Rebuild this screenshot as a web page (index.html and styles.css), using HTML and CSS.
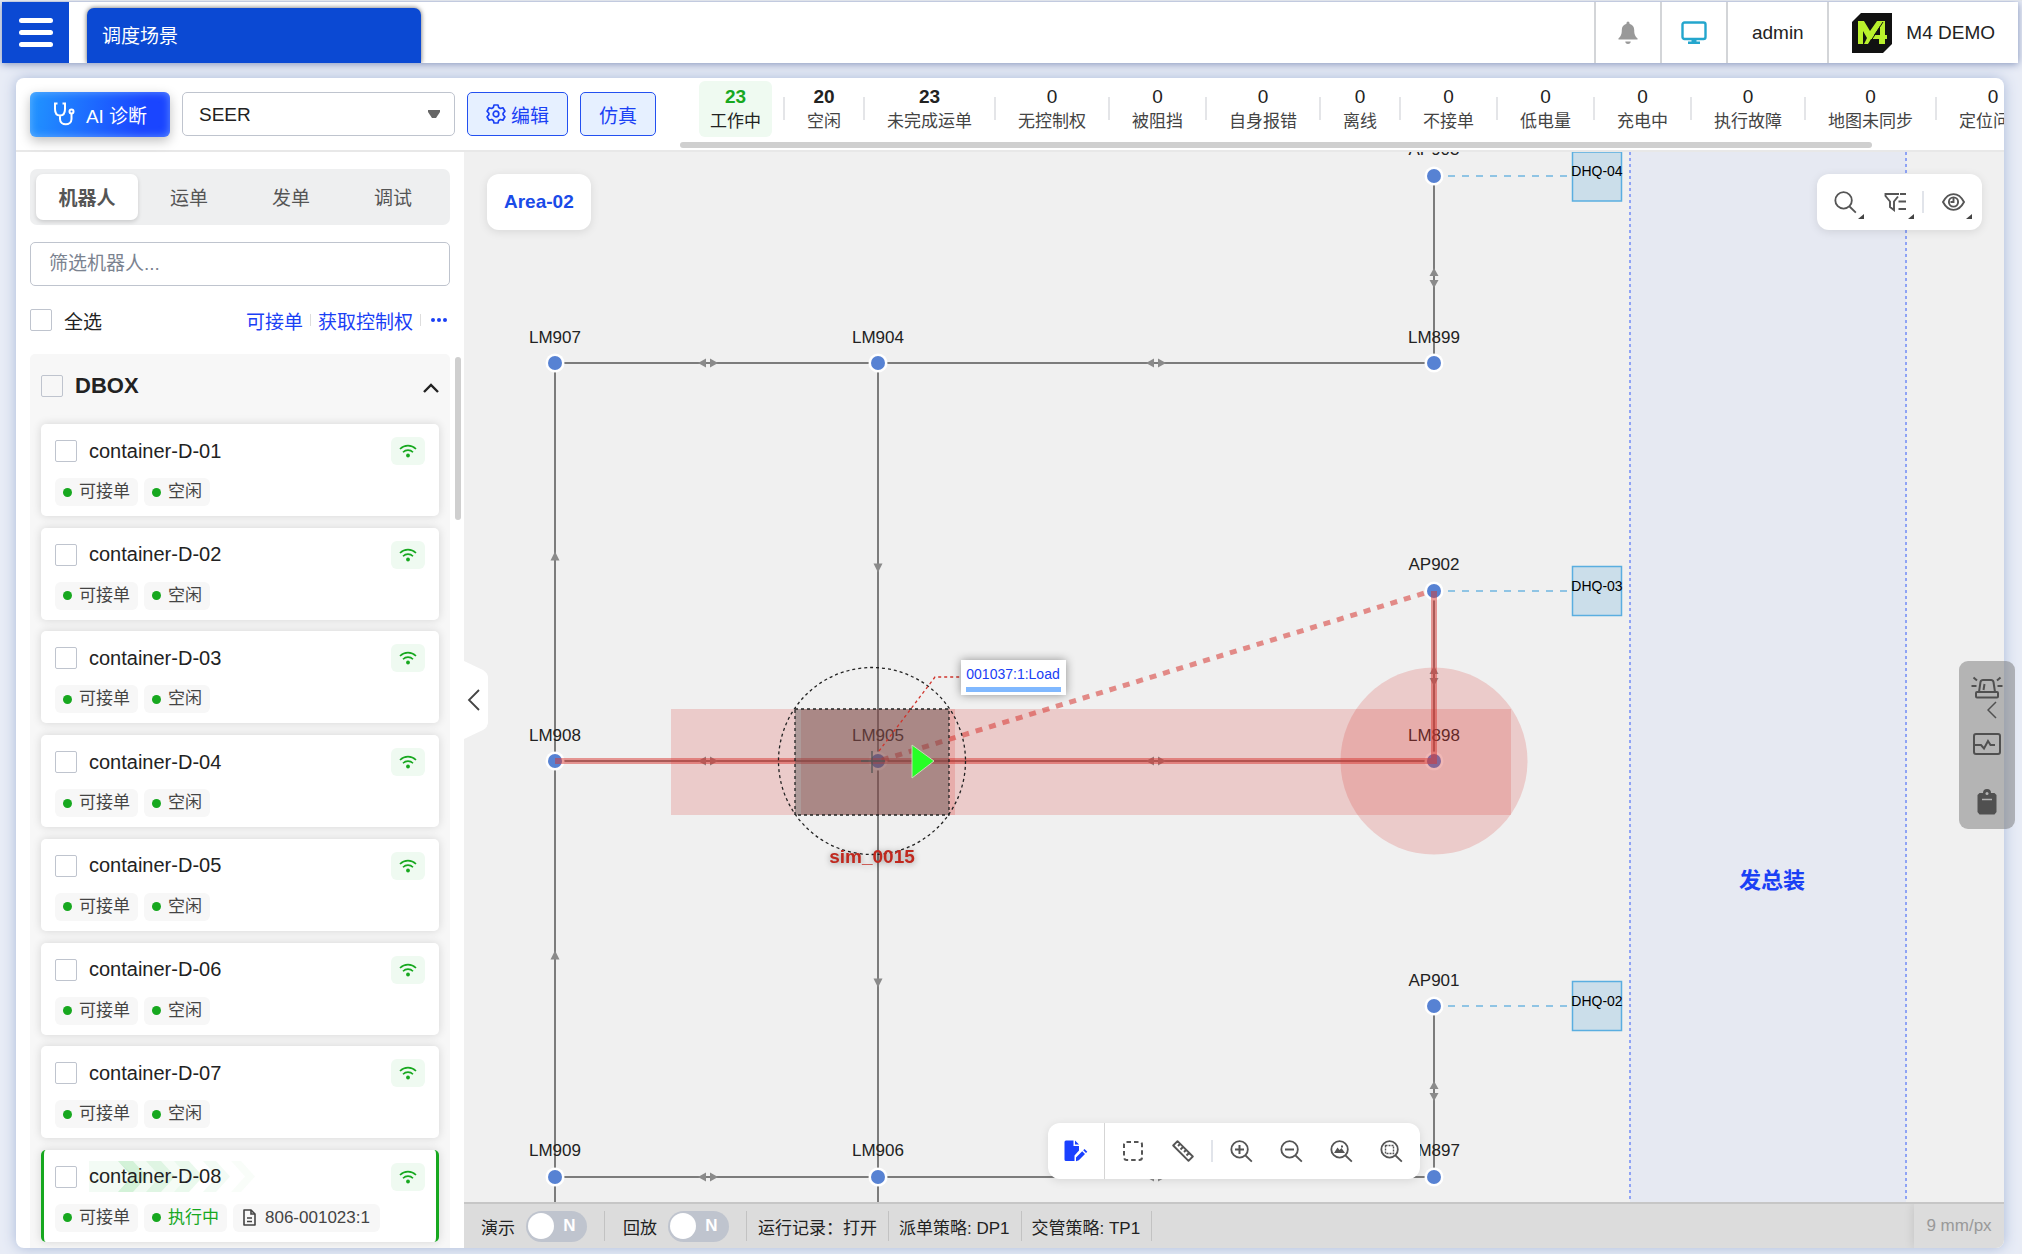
FILE: index.html
```html
<!DOCTYPE html>
<html lang="zh-CN">
  <head>
    <meta charset="UTF-8" />
    <meta name="viewport" content="width=device-width, initial-scale=1.0" />
    <title>调度场景</title>
    <link rel="stylesheet" href="styles.css">
  </head>
  <body>
    <!-- shared icons -->
    <svg class="defs" width="0" height="0">
      <symbol id="wifi" viewBox="0 0 18 14">
        <path d="M1 5C5.500 0.500 12.500 0.500 17 5M4 8.200C6.800 5.400 11.200 5.400 14 8.200" fill="none" stroke="currentColor" stroke-width="1.600" />
        <circle cx="9" cy="11.500" r="1.900" fill="currentColor" />
      </symbol>
      <symbol id="lens" viewBox="0 0 24 24">
        <path d="M10 1.200a8.600 8.600 0 1 1 0 17.200a8.600 8.600 0 1 1 0-17.200M16.200 16.200L22.800 22.600" fill="none" stroke="currentColor" stroke-width="1.900" />
      </symbol>
    </svg>

    <header class="header">
      <button class="menu-btn" aria-label="菜单"><span></span><span></span><span></span></button>
      <a href="#" class="page-tab">调度场景</a>
      <div class="header-right">
        <button class="header-cell icon-cell bell" aria-label="通知">
          <svg width="20" height="24" viewBox="0 0 20 24"><path d="M10 0.500a1.500 1.500 0 0 1 1.500 1.500v0.700c3 0.800 4.700 3.200 4.700 6.300 0 5 1.300 6.500 3.300 8.300v1.200H0.500v-1.200C2.500 15.500 3.800 14 3.800 9c0-3.100 1.700-5.500 4.700-6.300V2A1.500 1.500 0 0 1 10 0.500ZM7.300 20.500h5.400a2.700 2.400 0 0 1-5.400 0Z" fill="currentColor" /></svg>
        </button>
        <button class="header-cell icon-cell screen" aria-label="屏幕">
          <svg width="26" height="24" viewBox="0 0 26 24"><rect x="1.500" y="1.500" width="23" height="16.500" rx="2" fill="none" stroke="currentColor" stroke-width="2.400" /><path d="M10.500 18h5v2.500h3.500v2.500H7v-2.500h3.500Z" fill="currentColor" /></svg>
        </button>
        <button class="header-cell user">admin</button>
        <div class="header-cell brand">
          <svg width="40" height="40" viewBox="0 0 40 40">
            <path d="M9 0H40V31L31 40H0V9Z" fill="#111" />
            <path d="M6 31V8H12L18 18L25 8H33V22H35V26H33V31H27V26H19L16 31H12L15 25L11 18V31ZM28 13L22 22H28Z" fill="#b9f02c" />
            <path d="M17 31L31 9" stroke="#111" stroke-width="1" />
          </svg>
          <span>M4 DEMO</span>
        </div>
      </div>
    </header>

    <main class="panel">
      <div class="toolbar">
        <button class="btn-ai">
          <svg width="22" height="24" viewBox="0 0 22 24" fill="none" stroke="currentColor" stroke-width="2"><path d="M4.500 1.500H2V7c0 4 2 6.500 5 6.500S12 11 12 7V1.500H9.500M7 13.500V17c0 7 11.500 7 11.500 0v-5" /><circle cx="18.500" cy="9.500" r="2" /></svg>
          AI 诊断
        </button>
        <select class="scene-select" aria-label="场景">
          <option>SEER</option>
        </select>
        <button class="btn-outline">
          <svg width="20" height="20" viewBox="0 0 20 20" fill="none" stroke="currentColor" stroke-width="1.700"><path d="M8 1h4l.7 2.600 1.600.9 2.600-.7 2 3.400L17.100 9.200v1.600l1.800 2-2 3.400-2.600-.7-1.600.9L12 19H8l-.7-2.600-1.600-.9-2.600.7-2-3.400 1.800-2V9.200L1.100 7.200l2-3.400 2.600.7 1.600-.9Z" stroke-linejoin="round" /><circle cx="10" cy="10" r="2.800" /></svg>
          编辑
        </button>
        <button class="btn-outline">仿真</button>

        <div class="stats">
          <div class="stats-row">
            <div class="stat working"><b>23</b><span>工作中</span></div>
            <div class="stat"><b>20</b><span>空闲</span></div>
            <div class="stat"><b>23</b><span>未完成运单</span></div>
            <div class="stat zero"><b>0</b><span>无控制权</span></div>
            <div class="stat zero"><b>0</b><span>被阻挡</span></div>
            <div class="stat zero"><b>0</b><span>自身报错</span></div>
            <div class="stat zero"><b>0</b><span>离线</span></div>
            <div class="stat zero"><b>0</b><span>不接单</span></div>
            <div class="stat zero"><b>0</b><span>低电量</span></div>
            <div class="stat zero"><b>0</b><span>充电中</span></div>
            <div class="stat zero"><b>0</b><span>执行故障</span></div>
            <div class="stat zero"><b>0</b><span>地图未同步</span></div>
            <div class="stat zero"><b>0</b><span>定位问题</span></div>
          </div>
          <div class="stats-scroll"></div>
        </div>
      </div>

      <div class="workspace">
        <aside class="sidebar">
          <div class="tabs">
            <button class="active">机器人</button>
            <button>运单</button>
            <button>发单</button>
            <button>调试</button>
          </div>
          <input type="text" class="search" placeholder="筛选机器人..." aria-label="筛选机器人" />
          <div class="select-row">
            <label class="check"><input type="checkbox" />全选</label>
            <div class="links">
              <a href="#">可接单</a>
              <a href="#">获取控制权</a>
              <a href="#" class="dots" aria-label="更多"><i></i><i></i><i></i></a>
            </div>
          </div>

          <section class="group">
            <div class="group-head">
              <label class="check"><input type="checkbox" />DBOX</label>
              <button aria-label="收起">
                <svg width="16" height="10" viewBox="0 0 16 10"><path d="M1 9L8 2L15 9" fill="none" stroke="currentColor" stroke-width="2.400" /></svg>
              </button>
            </div>
            <div class="robots">
              <article class="robot">
                <div class="robot-top"><label class="check"><input type="checkbox" />container-D-01</label><span class="wifi"><svg><use href="#wifi" /></svg></span></div>
                <div class="chips"><span class="chip"><i></i>可接单</span><span class="chip"><i></i>空闲</span></div>
              </article>
              <article class="robot">
                <div class="robot-top"><label class="check"><input type="checkbox" />container-D-02</label><span class="wifi"><svg><use href="#wifi" /></svg></span></div>
                <div class="chips"><span class="chip"><i></i>可接单</span><span class="chip"><i></i>空闲</span></div>
              </article>
              <article class="robot">
                <div class="robot-top"><label class="check"><input type="checkbox" />container-D-03</label><span class="wifi"><svg><use href="#wifi" /></svg></span></div>
                <div class="chips"><span class="chip"><i></i>可接单</span><span class="chip"><i></i>空闲</span></div>
              </article>
              <article class="robot">
                <div class="robot-top"><label class="check"><input type="checkbox" />container-D-04</label><span class="wifi"><svg><use href="#wifi" /></svg></span></div>
                <div class="chips"><span class="chip"><i></i>可接单</span><span class="chip"><i></i>空闲</span></div>
              </article>
              <article class="robot">
                <div class="robot-top"><label class="check"><input type="checkbox" />container-D-05</label><span class="wifi"><svg><use href="#wifi" /></svg></span></div>
                <div class="chips"><span class="chip"><i></i>可接单</span><span class="chip"><i></i>空闲</span></div>
              </article>
              <article class="robot">
                <div class="robot-top"><label class="check"><input type="checkbox" />container-D-06</label><span class="wifi"><svg><use href="#wifi" /></svg></span></div>
                <div class="chips"><span class="chip"><i></i>可接单</span><span class="chip"><i></i>空闲</span></div>
              </article>
              <article class="robot">
                <div class="robot-top"><label class="check"><input type="checkbox" />container-D-07</label><span class="wifi"><svg><use href="#wifi" /></svg></span></div>
                <div class="chips"><span class="chip"><i></i>可接单</span><span class="chip"><i></i>空闲</span></div>
              </article>
              <article class="robot running">
                <svg class="flow" width="166" height="31" viewBox="0 0 166 31" fill="#35c24f">
                  <path d="M0 0H29L46 15.500L29 31H0Z" opacity=".06" />
                  <path d="M29 0H44L58 15.500L44 31H29L43 15.500Z" opacity=".22" />
                  <path d="M44 0H57L71 15.500L57 31H44L58 15.500Z" opacity=".07" />
                  <path d="M57 0H72L86 15.500L72 31H57L71 15.500Z" opacity=".16" />
                  <path d="M72 0H85L99 15.500L85 31H72L86 15.500Z" opacity=".05" />
                  <path d="M85 0H100L114 15.500L100 31H85L99 15.500Z" opacity=".1" />
                  <path d="M114 0H127L141 15.500L127 31H114L128 15.500Z" opacity=".06" />
                  <path d="M142 0H152L166 15.500L152 31H142L156 15.500Z" opacity=".03" />
                </svg>
                <div class="robot-top"><label class="check"><input type="checkbox" />container-D-08</label><span class="wifi"><svg><use href="#wifi" /></svg></span></div>
                <div class="chips">
                  <span class="chip"><i></i>可接单</span><span class="chip busy"><i></i>执行中</span>
                  <span class="chip order"><svg width="13" height="17" viewBox="0 0 13 17" fill="none" stroke="currentColor" stroke-width="1.600"><path d="M1 1H8L12 5V16H1Z" stroke-linejoin="round" /><path d="M8 1V5H12M4 9H9M4 12.500H9" /></svg>806-001023:1</span>
                </div>
              </article>
            </div>
          </section>
          <div class="side-scroll"></div>
        </aside>

        <section class="stage">
          <div class="map">
            <svg class="map-canvas" viewBox="464 152 1540 1050" preserveAspectRatio="xMinYMin slice">
              <defs>
                <g id="node"><circle r="9.500" fill="#fff" /><circle r="7" fill="#5782d3" /></g>
                <path id="both" d="M-10 0L-2 -4.500V4.500ZM10 0L2 -4.500V4.500Z" />
                <path id="up" d="M0 -4.500L4.500 4.500H-4.500Z" />
              </defs>

              <!-- area -->
              <rect x="1630" y="140" width="276" height="1070" fill="#e6e9f2" />
              <path d="M1630 152V1202M1906 152V1202" stroke="#8fa3f5" stroke-width="2" stroke-dasharray="3 3" />
              <text x="1772" y="888" class="area-name">发总装</text>

              <!-- lanes -->
              <path class="lane" d="M555 363V1202M878 363V1202M1434 176V363M1434 591V761M1434 1006V1177M555 363H1434M555 761H1434M555 1177H1434" />
              <g class="arrows">
                <use href="#both" x="708" y="363" /><use href="#both" x="1156" y="363" />
                <use href="#both" x="708" y="761" /><use href="#both" x="1156" y="761" />
                <use href="#both" x="708" y="1177" /><use href="#both" x="1156" y="1177" />
                <use href="#both" transform="translate(1434 278) rotate(90)" />
                <use href="#both" transform="translate(1434 676) rotate(90)" />
                <use href="#both" transform="translate(1434 1091) rotate(90)" />
                <use href="#up" x="555" y="556" /><use href="#up" x="555" y="955" />
                <use href="#up" transform="translate(878 568) rotate(180)" />
                <use href="#up" transform="translate(878 983) rotate(180)" />
              </g>

              <!-- storage slots -->
              <path d="M1448 176H1571M1448 591H1571M1448 1006H1571" stroke="#8fc4e4" stroke-width="2" stroke-dasharray="7 7" />
              <g class="slot"><rect x="1572.500" y="152" width="49" height="49" /><rect x="1572.500" y="566.500" width="49" height="49" /><rect x="1572.500" y="981.500" width="49" height="49" /></g>
              <g class="slot-name">
                <text x="1597" y="176">DHQ-04</text>
                <text x="1597" y="591">DHQ-03</text>
                <text x="1597" y="1006">DHQ-02</text>
              </g>

              <!-- points -->
              <use href="#node" x="555" y="363" /><use href="#node" x="878" y="363" /><use href="#node" x="1434" y="363" />
              <use href="#node" x="1434" y="176" /><use href="#node" x="1434" y="591" /><use href="#node" x="1434" y="1006" />
              <use href="#node" x="555" y="761" /><use href="#node" x="878" y="761" /><use href="#node" x="1434" y="761" />
              <use href="#node" x="555" y="1177" /><use href="#node" x="878" y="1177" /><use href="#node" x="1434" y="1177" />
              <g class="point-name">
                <text x="555" y="343">LM907</text><text x="878" y="343">LM904</text><text x="1434" y="343">LM899</text>
                <text x="1434" y="155">AP903</text><text x="1434" y="570">AP902</text><text x="1434" y="986">AP901</text>
                <text x="555" y="741">LM908</text><text x="878" y="741">LM905</text><text x="1434" y="741">LM898</text>
                <text x="555" y="1156">LM909</text><text x="878" y="1156">LM906</text><text x="1434" y="1156">LM897</text>
              </g>

              <!-- planned route and occupied space -->
              <g fill="#d73732" fill-opacity=".2">
                <rect x="671" y="709" width="840" height="106" />
                <rect x="801" y="709" width="154" height="106" />
                <circle cx="1434" cy="761" r="93.500" />
              </g>
              <path d="M555 761H1434V591" fill="none" stroke="#d73732" stroke-opacity=".5" stroke-width="6" />
              <path d="M882 760L1428 592" stroke="#d73732" stroke-opacity=".55" stroke-width="5" stroke-dasharray="7 7" />

              <!-- robot -->
              <rect x="795" y="709" width="154" height="106" fill="#4f4f4f" fill-opacity=".4" />
              <g fill="none" stroke="#222" stroke-width="1.300" stroke-dasharray="3 3">
                <rect x="795" y="709" width="154" height="106" />
                <circle cx="872" cy="761" r="93.500" />
              </g>
              <path d="M872 751V773M861 761H885" stroke="#555" stroke-width="1.300" />
              <path d="M912 745L934 761L912 778Z" fill="#26ff26" stroke="#c9d9b8" />
              <path d="M879 751L935 677H961" fill="none" stroke="#d0342c" stroke-width="1.300" stroke-dasharray="3 3" />
              <text x="872" y="863" class="robot-name">sim_0015</text>
              <g class="task">
                <rect x="961" y="660" width="105" height="35" fill="#fff" />
                <rect x="966" y="687" width="95" height="5" fill="#80b8ff" />
              </g>
              <text x="1013" y="679" class="task-name">001037:1:Load</text>
            </svg>

            <div class="area-tag">Area-02</div>

            <div class="tool-box view-tools">
              <button class="more" aria-label="搜索"><svg width="23" height="23"><use href="#lens" /></svg></button>
              <button class="more" aria-label="筛选"><svg width="23" height="20" viewBox="0 0 23 20" fill="none" stroke="currentColor" stroke-width="1.900"><path d="M15 2H1.500V4L6 9.500V15L10 18V9.500L14 4.500M16 2H22M14.500 9.500H22M14.500 17H22" /></svg></button>
              <span class="sep"></span>
              <button class="more" aria-label="显示"><svg width="23" height="18" viewBox="0 0 23 18" fill="none" stroke="currentColor" stroke-width="1.900"><path d="M1 9C6.500-1.500 16.500-1.500 22 9C16.500 19.500 6.500 19.500 1 9Z" /><circle cx="11.500" cy="9" r="4.600" /><path d="M11.500 5V9H8.500" /></svg></button>
            </div>

            <div class="tool-box edit-tools">
              <button class="note" aria-label="记录"><svg width="24" height="22" viewBox="0 0 24 22"><path d="M2 0.500H9.500V6H15V10.500L10.500 15.500V21H2A1.500 1.500 0 0 1 0.500 19.500V2A1.500 1.500 0 0 1 2 0.500ZM11 0.500L15 4.500H11ZM12 17.500L18.200 11.300L21 14L14.800 20.300L12 21.200ZM19.200 10.300L20.500 9L23.300 11.800L22 13Z" fill="currentColor" /></svg></button>
              <button aria-label="框选"><svg width="20" height="20" viewBox="0 0 20 20" fill="none" stroke="currentColor" stroke-width="2"><rect x="1" y="1" width="18" height="18" rx="2.500" stroke-dasharray="4.500 3" /></svg></button>
              <button aria-label="测量"><svg width="22" height="22" viewBox="0 0 22 22" fill="none" stroke="currentColor" stroke-width="1.900" stroke-linejoin="round"><path d="M1.200 5.500L5.500 1.200L20.800 16.500L16.500 20.800ZM8 4L6 6M11 7L8.500 9.500M14 10L12 12M17 13L14.500 15.500" /></svg></button>
              <span class="sep"></span>
              <button aria-label="放大"><svg width="23" height="23"><use href="#lens" /><path d="M9.500 5V14M5 9.500H14" stroke="currentColor" stroke-width="2" /></svg></button>
              <button aria-label="缩小"><svg width="23" height="23"><use href="#lens" /><path d="M5 9.500H14" stroke="currentColor" stroke-width="2" /></svg></button>
              <button aria-label="适应地图"><svg width="23" height="23"><use href="#lens" /><path d="M4 13L7.500 7.500L9.500 10L11.500 8L15 13ZM11 5.500H13V7.500H11Z" fill="currentColor" /></svg></button>
              <button aria-label="框选放大"><svg width="23" height="23"><use href="#lens" /><rect x="5.500" y="5.500" width="8" height="8" fill="none" stroke="currentColor" stroke-width="1.400" stroke-dasharray="2 1" /></svg></button>
            </div>

            <button class="collapse" aria-label="收起侧栏">
              <svg width="24" height="78" viewBox="0 0 24 78"><path d="M0 0L19 9Q24 12 24 17V61Q24 66 19 69L0 78Z" fill="#fff" /><path d="M15 29L5 39L15 49" fill="none" stroke="currentColor" stroke-width="1.800" /></svg>
            </button>
          </div>

          <footer class="status">
            <div class="status-item">演示<label class="switch"><input type="checkbox" aria-label="演示" /><span>N</span></label></div>
            <div class="status-item">回放<label class="switch"><input type="checkbox" aria-label="回放" /><span>N</span></label></div>
            <div class="status-item text">运行记录：打开</div>
            <div class="status-item text">派单策略: DP1</div>
            <div class="status-item text">交管策略: TP1</div>
            <div class="scale">9 mm/px</div>
          </footer>
        </section>
      </div>

      <div class="dock">
        <button aria-label="告警"><svg width="32" height="24" viewBox="0 0 32 24" fill="none" stroke="currentColor" stroke-width="2"><rect x="5" y="17" width="22" height="5.500" rx="1" /><path d="M8 17L9.500 7Q10 5 12 5H20Q22 5 22.500 7L24 17M13.500 9L12.500 15M0.500 11H5.500M2.500 2.500L6 5.500M26.500 11H31.500M29.500 2.500L26 5.500" /></svg></button>
        <svg class="dock-arrow" width="10" height="18" viewBox="0 0 10 18"><path d="M9 1L1 9L9 17" fill="none" stroke="currentColor" stroke-width="1.500" /></svg>
        <button aria-label="监控"><svg width="28" height="22" viewBox="0 0 28 22" fill="none" stroke="currentColor" stroke-width="2"><rect x="1" y="1" width="26" height="20" rx="2" /><path d="M1 12H8L11 15.500L15 8L17.500 12H22" /></svg></button>
        <button aria-label="任务"><svg width="20" height="26" viewBox="0 0 20 26"><path d="M2.500 4H6a4 4 0 0 1 8 0H17.500L19.500 6V23L17.500 25.500H2.500L0.500 23V6Z" fill="currentColor" /><circle cx="10" cy="4.500" r="1.500" fill="#b2b2b2" /><path d="M5 10.500H15" stroke="#b2b2b2" stroke-width="1.500" /></svg></button>
      </div>
    </main>
  </body>
</html>
```
FILE: styles.css
```css
* {
  box-sizing: border-box;
}
body {
  margin: 0;
  height: 100vh;
  padding: 1px 4px 6px 2px;
  display: flex;
  flex-direction: column;
  overflow: hidden;
  background-color: #e8ecf6;
  border-top: 1px solid #dfe3ea;
  color: #222;
  font-family: "Liberation Sans", "Noto Sans CJK SC", sans-serif;
  font-size: 19px;
}
button,
input,
select {
  font: inherit;
  color: inherit;
}
button {
  margin: 0;
  padding: 0;
  border: none;
  background: none;
  cursor: pointer;
}
a {
  text-decoration: none;
}
.defs {
  position: absolute;
}

/* header */
.header {
  height: 61px;
  flex: none;
  display: flex;
  background-color: white;
  box-shadow: 0 1px 8px #8090b8;
  z-index: 1;
}
.menu-btn {
  width: 67px;
  background-color: #0b49d3;
  display: flex;
  flex-direction: column;
  justify-content: center;
  align-items: center;
  gap: 7px;
}
.menu-btn span {
  width: 34px;
  height: 5px;
  border-radius: 3px;
  background-color: white;
}
.page-tab {
  width: 334px;
  margin: 6px 0 0 18px;
  padding: 0 0 3px 15px;
  display: flex;
  align-items: center;
  background-color: #0b49d3;
  color: white;
  border-radius: 7px 7px 0 0;
  box-shadow: 0 0 5px rgba(0, 0, 0, 0.6);
  clip-path: inset(-6px -6px 0 -6px);
}
.header-right {
  margin-left: auto;
  display: flex;
}
.header-cell {
  border-left: 2px solid #d3d5d8;
  display: flex;
  align-items: center;
  justify-content: center;
}
.icon-cell {
  width: 66px;
}
.bell {
  color: #999;
}
.screen {
  color: #24a6cd;
}
.user {
  width: 101px;
}
.brand {
  gap: 14px;
  padding: 0 23px;
}

/* main panel */
.panel {
  flex: 1;
  min-height: 0;
  margin: 15px 14px 0 14px;
  position: relative;
  display: flex;
  flex-direction: column;
  background-color: white;
  border-radius: 8px;
  box-shadow: 0 0 14px #a9b9d8;
}
.toolbar {
  height: 74px;
  flex: none;
  padding-left: 14px;
  display: flex;
  align-items: center;
  gap: 12px;
  border-bottom: 2px solid #e8e8e8;
}
.btn-ai {
  width: 140px;
  height: 45px;
  flex: none;
  display: flex;
  align-items: center;
  justify-content: center;
  gap: 11px;
  color: white;
  border-radius: 6px;
  background: linear-gradient(100deg, #2196ff, #1a45ff 80%);
  box-shadow: 0 4px 12px rgba(0, 0, 0, 0.25), inset 0 0 8px rgba(150, 200, 255, 0.6);
}
.scene-select {
  width: 273px;
  height: 44px;
  flex: none;
  appearance: none;
  padding: 0 16px;
  border: 1px solid #bfc4ce;
  border-radius: 5px;
  background: url("data:image/svg+xml,%3Csvg xmlns='http://www.w3.org/2000/svg' viewBox='0 0 12 8'%3E%3Cpath d='M0 0H12V2L8 8H4L0 2Z' fill='%23666'/%3E%3C/svg%3E") right 14px center / 12px 8px no-repeat white;
}
.btn-outline {
  height: 44px;
  flex: none;
  padding: 0 18px;
  display: flex;
  align-items: center;
  gap: 5px;
  color: #1a40f5;
  border: 1px solid #2350f0;
  border-radius: 5px;
  background-color: #e6f0ff;
}

/* counters */
.stats {
  flex: 1;
  min-width: 0;
  height: 100%;
  margin-left: 12px;
  overflow: hidden;
}
.stats-row {
  display: flex;
  width: max-content;
  padding: 3px 0 0 19px;
}
.stat {
  height: 56px;
  padding: 3px 11px;
  margin-right: 24px;
  position: relative;
  display: flex;
  flex-direction: column;
  align-items: center;
  border-radius: 6px;
  font-size: 17px;
  line-height: 24px;
  color: #444;
}
.stat b {
  font-size: 19px;
  line-height: 26px;
  color: #222;
}
.stat.zero b {
  font-weight: normal;
}
.stat::after {
  content: "";
  position: absolute;
  right: -13px;
  top: 16px;
  width: 2px;
  height: 23px;
  background-color: #e4e5e8;
}
.stat.working {
  background-color: #effaf1;
  color: #222;
}
.stat.working b {
  color: #17a81f;
}
.stats-scroll {
  width: 90%;
  height: 6px;
  margin-top: 5px;
  border-radius: 3px;
  background-color: #cfcfcf;
}

/* sidebar */
.workspace {
  flex: 1;
  min-height: 0;
  display: flex;
}
.sidebar {
  width: 448px;
  flex: none;
  position: relative;
  padding: 17px 14px 0;
  display: flex;
  flex-direction: column;
  gap: 17px;
}
.tabs {
  height: 56px;
  padding: 5px 6px;
  display: flex;
  border-radius: 7px;
  background-color: #eeeff0;
}
.tabs button {
  flex: 1;
  padding-bottom: 2px;
  color: #555;
  border-radius: 7px;
}
.tabs .active {
  font-weight: bold;
  background-color: white;
  box-shadow: 0 2px 4px rgba(0, 0, 0, 0.15);
}
.search {
  height: 44px;
  padding: 0 18px;
  border: 1px solid #bfc4ce;
  border-radius: 5px;
  outline: none;
}
.search::placeholder {
  color: #7b8390;
}
.select-row {
  height: 34px;
  display: flex;
  align-items: center;
  justify-content: space-between;
}
.check {
  display: flex;
  align-items: center;
  gap: 12px;
}
.check input {
  appearance: none;
  width: 22px;
  height: 22px;
  margin: 0;
  border: 1px solid #bfc4ce;
  border-radius: 2px;
}
.links {
  display: flex;
  align-items: center;
}
.links a {
  color: #1a40f5;
}
.links a + a {
  position: relative;
  margin-left: 15px;
}
.links a + a::before {
  content: "";
  position: absolute;
  left: -8px;
  top: 50%;
  height: 12px;
  margin-top: -6px;
  border-left: 1px solid #ddd;
}
.links .dots {
  display: flex;
  gap: 2px;
  padding: 6px 3px;
}
.dots i {
  width: 4px;
  height: 4px;
  border-radius: 50%;
  background-color: #1a40f5;
}
.group {
  flex: 1;
  min-height: 0;
  padding: 0 11px 6px;
  display: flex;
  flex-direction: column;
  border-radius: 5px 5px 0 0;
  background-color: #f7f7f7;
}
.group-head {
  height: 70px;
  padding-bottom: 7px;
  flex: none;
  display: flex;
  align-items: center;
  justify-content: space-between;
  font-size: 22px;
  font-weight: bold;
}
.robots {
  flex: 1;
  display: flex;
  flex-direction: column;
  justify-content: space-between;
}
.robot {
  height: 92px;
  padding: 13px 14px 0;
  position: relative;
  border-radius: 5px;
  background-color: white;
  box-shadow: 0 0 10px rgba(0, 0, 0, 0.14);
}
.running {
  padding: 13px 11px 0;
  border: solid #17a81f;
  border-width: 0 3px;
}
.flow {
  position: absolute;
  left: 45px;
  top: 11px;
}
.robot-top {
  position: relative;
  height: 28px;
  display: flex;
  align-items: center;
  justify-content: space-between;
  font-size: 20px;
}
.wifi {
  width: 34px;
  height: 28px;
  display: flex;
  align-items: center;
  justify-content: center;
  border-radius: 6px;
  background-color: #effaf1;
  color: #17a81f;
}
.wifi svg {
  width: 18px;
  height: 14px;
}
.chips {
  margin-top: 13px;
  display: flex;
  gap: 6px;
  font-size: 17px;
  line-height: 28px;
  color: #444;
}
.chip {
  height: 28px;
  padding: 0 8px;
  display: flex;
  align-items: center;
  gap: 7px;
  border-radius: 6px;
  background-color: #f7f7f7;
}
.chip i {
  width: 9px;
  height: 9px;
  border-radius: 50%;
  background-color: #17a81f;
}
.busy {
  color: #17a81f;
}
.order {
  padding: 0 10px;
  gap: 9px;
}
.side-scroll {
  position: absolute;
  right: 3px;
  top: 205px;
  width: 6px;
  height: 163px;
  border-radius: 3px;
  background-color: #cfcfcf;
}

/* map */
.stage {
  flex: 1;
  min-width: 0;
  display: flex;
  flex-direction: column;
}
.map {
  flex: 1;
  min-height: 0;
  position: relative;
  background-color: #f0f0f0;
}
.map-canvas {
  display: block;
  position: absolute;
  width: 100%;
  height: 100%;
}
.map-canvas text {
  text-anchor: middle;
}
.lane {
  fill: none;
  stroke: #555;
  stroke-width: 1.5;
}
.arrows {
  fill: #8a8a8a;
}
.point-name {
  font-size: 17px;
  fill: #222;
}
.slot rect {
  fill: #cbdeea;
  stroke: #5aaee0;
  stroke-width: 1.5;
}
.slot-name {
  font-size: 14px;
  fill: black;
}
.area-name {
  font-size: 22px;
  font-weight: bold;
  fill: #1a40f5;
}
.robot-name {
  font-size: 19px;
  font-weight: bold;
  fill: #c0281e;
  filter: drop-shadow(0 1px 3px rgba(0, 0, 0, 0.4));
}
.task {
  filter: drop-shadow(0 0 5px rgba(0, 0, 0, 0.4));
}
.task-name {
  font-size: 14px;
  fill: #1a40f5;
}
.area-tag,
.tool-box {
  position: absolute;
  height: 56px;
  display: flex;
  align-items: center;
  border-radius: 12px;
  background-color: white;
  box-shadow: 0 2px 10px rgba(0, 0, 0, 0.1);
}
.area-tag {
  left: 23px;
  top: 22px;
  padding: 0 17px;
  font-weight: bold;
  color: #1a4be8;
}
.tool-box button {
  width: 50px;
  height: 100%;
  display: flex;
  align-items: center;
  justify-content: center;
  color: #555;
}
.sep {
  width: 2px;
  height: 22px;
  background-color: #e1e4ea;
}
.view-tools {
  right: 22px;
  top: 22px;
  padding: 0 4px 0 3px;
}
.view-tools .sep {
  margin: 0 4px 0 2px;
}
.more {
  position: relative;
}
.more::after {
  content: "";
  position: absolute;
  right: 6px;
  bottom: 11px;
  border-left: 6px solid transparent;
  border-bottom: 5px solid #444;
}
.edit-tools {
  left: 50%;
  bottom: 23px;
  transform: translateX(-50%);
  padding-right: 4px;
}
.edit-tools .note {
  width: 57px;
  margin-right: 3px;
  border-right: 1px solid #d5d5d5;
  color: #1a40ff;
}
.edit-tools .sep {
  margin: 0 3px;
}
.collapse {
  position: absolute;
  left: 0;
  top: 509px;
  color: #444;
}
.collapse svg {
  display: block;
}

/* status bar */
.status {
  height: 46px;
  flex: none;
  padding-left: 17px;
  display: flex;
  align-items: center;
  font-size: 17px;
  border-top: 2px solid #c6c6c6;
  border-radius: 0 0 8px 0;
  background-color: #dcdcdc;
  overflow: hidden;
}
.status-item {
  height: 30px;
  margin-right: 18px;
  padding-right: 17px;
  display: flex;
  align-items: center;
  gap: 11px;
  border-right: 1px solid #c2c2c2;
}
.status-item + .text {
  margin: 0 10px 0 -7px;
}
.status-item.text {
  padding-right: 11px;
}
.status-item.text + .text {
  margin-left: 0;
}
.switch {
  width: 61px;
  height: 31px;
  padding-left: 2px;
  display: flex;
  align-items: center;
  border-radius: 16px;
  background-color: #bfc4ce;
  color: white;
  font-weight: bold;
}
.switch input {
  appearance: none;
  width: 26px;
  height: 26px;
  margin: 0;
  border-radius: 50%;
  background-color: white;
}
.switch span {
  flex: 1;
  padding-right: 2px;
  text-align: center;
}
.scale {
  width: 90px;
  height: 100%;
  margin-left: auto;
  display: flex;
  align-items: center;
  justify-content: center;
  color: #999;
  box-shadow: 0 0 10px rgba(0, 0, 0, 0.12);
}

/* floating dock on the right edge */
.dock {
  position: absolute;
  right: -11px;
  top: 583px;
  width: 56px;
  height: 168px;
  padding: 14px 0;
  display: flex;
  flex-direction: column;
  justify-content: space-between;
  align-items: center;
  border-radius: 9px;
  background-color: rgba(120, 120, 120, 0.5);
  color: #505050;
}
.dock svg {
  display: block;
}
.dock-arrow {
  position: absolute;
  left: 28px;
  top: 40px;
}
```
